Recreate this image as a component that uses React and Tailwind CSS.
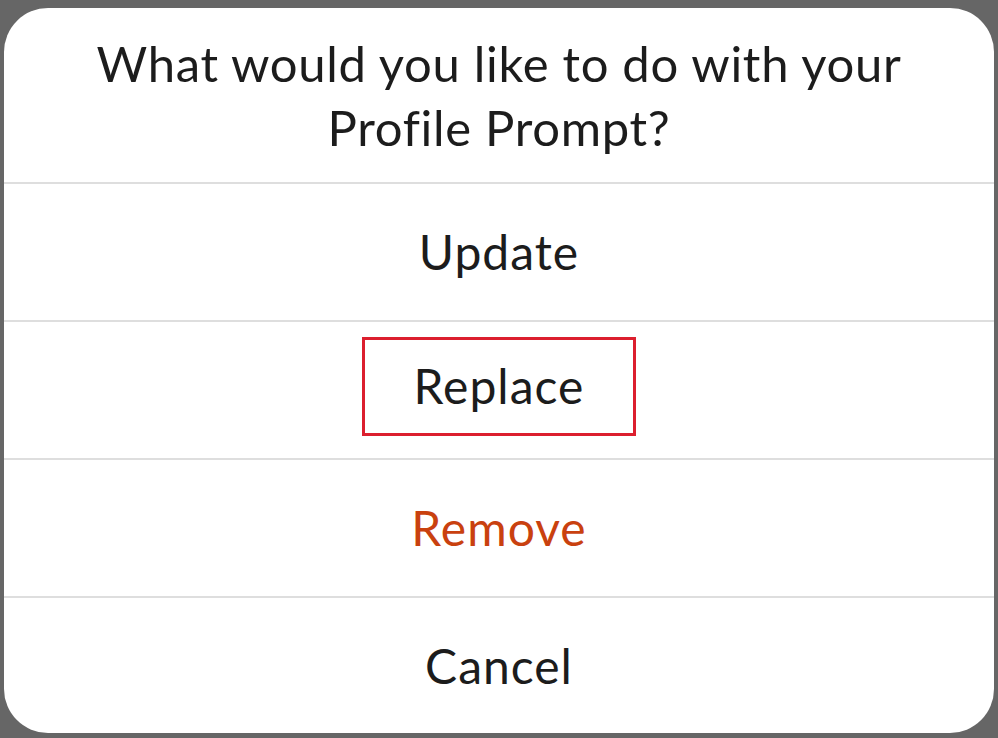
const options = [
  { label: 'Update', tone: 'text-[#1c1c1c]' },
  { label: 'Replace', tone: 'text-[#1c1c1c]', highlighted: true },
  { label: 'Remove', tone: 'text-[#c9410f]' },
];

const App = () => {
  return (
    <div
      className="w-[998px] h-[738px] bg-[#666666] pl-[4px] pr-[4px] pt-[8px] pb-[5px]"
      style={{ fontFamily: 'Lato, "Noto Sans", sans-serif' }}
    >
      <div className="h-full bg-white rounded-[44px] overflow-hidden flex flex-col">
        <div className="h-[174px] shrink-0 flex items-center justify-center text-center px-6">
          <p className="text-[49px] leading-[64px] text-[#1c1c1c] tracking-[0.7px]">
            What would you like to do with your
            <br />
            Profile Prompt?
          </p>
        </div>

        {options.map(opt => (
          <div
            key={opt.label}
            className="h-[138px] shrink-0 border-t-2 border-[#dedede] flex items-center justify-center"
          >
            {opt.highlighted ? (
              <div className="w-[274px] h-[99px] mb-2 border-[3px] border-[#dc1f2e] flex items-center justify-center">
                <span className={`text-[48px] tracking-[1px] ${opt.tone}`}>{opt.label}</span>
              </div>
            ) : (
              <span className={`text-[48px] tracking-[1px] ${opt.tone}`}>{opt.label}</span>
            )}
          </div>
        ))}

        <div className="flex-1 border-t-2 border-[#dedede] flex items-center justify-center">
          <span className="text-[48px] tracking-[1px] text-[#1c1c1c]">Cancel</span>
        </div>
      </div>
    </div>
  );
};

export default App;
